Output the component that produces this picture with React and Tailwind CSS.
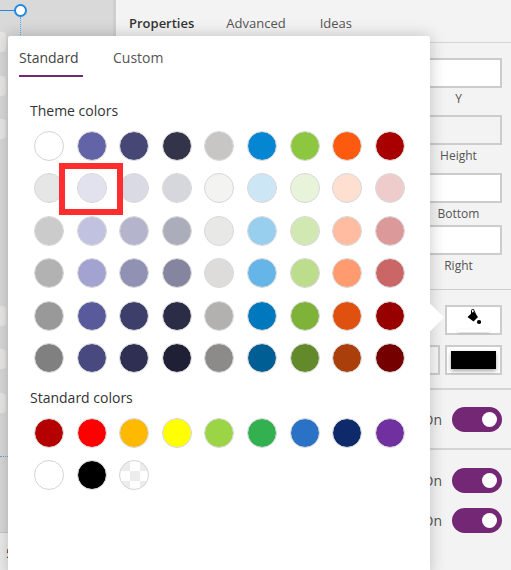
import React from 'react';

const FONT = { fontFamily: '"Open Sans", "Noto Sans", sans-serif' };

const THEME_COLORS = [
  ['#ffffff', '#6264a7', '#464775', '#33344a', '#c8c6c4', '#0586d2', '#8dc63f', '#fc5a0e', '#a80000'],
  ['#e6e6e6', '#e2e2ee', '#d9dae4', '#d6d7dd', '#f3f3f2', '#cce6f6', '#e8f4d9', '#ffdfd0', '#eecccc'],
  ['#cbcbcb', '#c1c1e0', '#b4b5cc', '#acadbb', '#e8e8e7', '#99cfee', '#d1e8b2', '#ffbca0', '#dc9999'],
  ['#b2b2b2', '#a2a3d0', '#9091b3', '#8585a0', '#dddcdb', '#66b5e8', '#bbdd8c', '#ff9b6f', '#cb6666'],
  ['#999999', '#585a9b', '#3d3e69', '#2b2c46', '#b3b1af', '#0078bd', '#7eb238', '#e0500e', '#980000'],
  ['#808080', '#484a7f', '#2e2f53', '#1f2036', '#8c8b89', '#005e94', '#628a2b', '#aa3f0b', '#750000'],
].flat();

const STANDARD_COLORS = [
  '#b50000', '#ff0000', '#ffb900', '#ffff00', '#9bd444', '#33b04f', '#2a72c6', '#0f2a6b', '#7030a0',
  '#ffffff', '#000000',
];

const Swatch = ({ color }) => (
  <div
    className="w-[30px] h-[30px] rounded-full border border-[#d4d4d4] bg-clip-padding"
    style={{ backgroundColor: color }}
  />
);

const Field = ({ label, white, value, className }) => (
  <div className={`flex flex-col items-center ${className}`}>
    <div className={`w-[87px] h-[30px] border-2 border-[#cccccc] flex items-center text-[14px] text-[#444] ${white ? 'bg-white' : ''}`}>
      {value}
    </div>
    <span className="text-[12px] leading-[20px] mt-px text-[#555]">{label}</span>
  </div>
);

const Toggle = () => (
  <div className="w-[50px] h-[25px] rounded-full bg-[#742774] flex items-center justify-end pr-[5px]">
    <div className="w-[15px] h-[15px] rounded-full bg-white" />
  </div>
);

const ToggleRow = ({ className }) => (
  <div className={`flex items-center justify-end ${className}`}>
    <span className="text-[14px] text-[#555] mr-[10px]">On</span>
    <Toggle />
  </div>
);

const BucketIcon = () => (
  <svg width="14" height="16" viewBox="0 0 14 16" className="mt-[2px]">
    <path d="M0.5 8 L6.5 2.5 L11 8 L6.5 12.5 Z" fill="#000" />
    <path d="M4.5 5 V1.6 A1.2 1.2 0 0 1 7 1.6 L9.5 7.5" fill="none" stroke="#000" strokeWidth="1" />
    <circle cx="12" cy="13" r="2.1" fill="#000" />
  </svg>
);

export default function App() {
  return (
    <div className="relative w-[511px] h-[570px] overflow-hidden flex bg-[#f3f3f3] text-[#333]" style={FONT}>
      {/* Canvas behind the popup */}
      <div className="w-[116px] h-full flex flex-col bg-[#d9d9d9] border-r-[3px] border-[#cfcfcf]">
        <div className="flex-1 flex flex-col">
          <div className="w-[6px] h-[20px] mt-[32px] rounded-r-sm bg-[#e9e8e6]" />
          <div className="w-[6px] h-[20px] mt-[24px] rounded-r-sm bg-[#e9e8e6]" />
          <div className="w-[6px] h-[20px] mt-[23px] rounded-r-sm bg-[#e9e8e6]" />
          <div className="w-[6px] h-[20px] mt-[167px] rounded-r-sm bg-[#e9e8e6]" />
          <div className="w-[6px] h-[20px] mt-[23px] rounded-r-sm bg-[#e9e8e6]" />
          <div className="w-[6px] h-[20px] mt-[24px] rounded-r-sm bg-[#e9e8e6]" />
        </div>
        <div className="h-[38px] bg-[#ececec] border-t border-[#c8c8c8] text-[13px] text-[#333] pl-[6px] pt-[11px]">5</div>
      </div>

      {/* Properties panel */}
      <div className="flex-1 flex flex-col">
        <div className="h-[43px] border-b border-[#d4d4d4] flex items-start pl-[13px] pt-[13px] gap-[32px] text-[13px] leading-[20px]">
          <span className="font-semibold text-[#333]">Properties</span>
          <span className="text-[#555]">Advanced</span>
          <span className="text-[#555] ml-[2px]">Ideas</span>
        </div>
        <div className="flex flex-col items-end pr-[9px] h-[247px] border-b border-[#cfcfcf] pt-[15px]">
          <Field label="Y" white />
          <Field label="Height" value={<span className="ml-[-2px] underline">2</span>} className="mt-[6px]" />
          <Field label="Bottom" white className="mt-[7px]" />
          <Field label="Right" white className="mt-px" />
        </div>
        <div className="h-[100px] border-b-2 border-[#d4d4d4] flex flex-col items-end pr-[9px] pt-[15px]">
          <div className="w-[57px] h-[30px] bg-white border-2 border-[#cccccc] flex flex-col items-center relative">
            <BucketIcon />
            <div className="absolute bottom-[1px] left-[11px] w-[31px] h-[3px] bg-white shadow-[0_1px_3px_rgba(0,0,0,0.18)]" />
          </div>
          <div className="flex mt-[10px] gap-[5px]">
            <div className="w-[40px] h-[30px] bg-[#f8f8f8] border-2 border-[#cccccc]" />
            <div className="w-[57px] h-[30px] bg-white border-2 border-[#cccccc] p-[4px]">
              <div className="w-full h-full bg-black shadow-[0_2px_4px_rgba(0,0,0,0.35)]" />
            </div>
          </div>
        </div>
        <div className="pr-[9px] h-[60px] border-b-2 border-[#d4d4d4] pt-[17px]">
          <ToggleRow />
        </div>
        <div className="pr-[9px] pt-[18px] flex flex-col gap-[15px]">
          <ToggleRow />
          <ToggleRow />
        </div>
      </div>

      {/* Selection handle on the canvas */}
      <div className="absolute left-0 top-[10px] w-[15px] h-px bg-[#2488e0]" />
      <div className="absolute left-[14px] top-[4px] w-[13px] h-[13px] rounded-full bg-white border-2 border-[#2488e0]" />
      <div className="absolute left-[20px] top-[17px] h-[20px] border-l border-dotted border-[#5aa7e6]" />
      <div className="absolute left-0 top-[456px] w-[8px] border-t border-dotted border-[#5aa7e6]" />

      {/* Colour picker popup */}
      <div className="absolute left-[8px] top-[36px] w-[422px] h-[540px] bg-white rounded-[2px] shadow-[0_0_16px_rgba(0,0,0,0.22)]">
        <div className="absolute left-[413px] top-[272px] w-[19px] h-[19px] rotate-45 bg-white" />
        <div className="relative">
          <div className="flex pl-[11px] gap-[30px] h-[41px] text-[14px] leading-[20px]">
            <div className="w-[64px] h-[41px] pt-[12px] border-b-2 border-[#742774] text-[#444] font-medium">Standard</div>
            <div className="pt-[12px] text-[#555]">Custom</div>
          </div>
          <div className="pl-[22px] mt-[24px] text-[14px] leading-[20px] text-[#333]">Theme colors</div>
          <div className="ml-[26px] mt-[10px] grid grid-cols-[repeat(9,30px)] gap-x-[12.6px] gap-y-[12.4px]">
            {THEME_COLORS.map((c, i) => <Swatch key={i} color={c} />)}
          </div>
          <div className="pl-[22px] mt-[15px] text-[14px] leading-[20px] text-[#333]">Standard colors</div>
          <div className="ml-[26px] mt-[10px] grid grid-cols-[repeat(9,30px)] gap-x-[12.6px] gap-y-[12.4px]">
            {STANDARD_COLORS.map((c, i) => <Swatch key={i} color={c} />)}
            <div className="w-[30px] h-[30px] rounded-full border border-[#d4d4d4] bg-[conic-gradient(#ffffff_25%,#ececec_0_50%,#ffffff_0_75%,#ececec_0)] bg-[length:20px_20px]" />
          </div>
        </div>
      </div>

      {/* Red highlight around the picked swatch */}
      <div className="absolute left-[59px] top-[163px] w-[64px] h-[52px] border-[6px] border-[#ff2d2d]" />
    </div>
  );
}
